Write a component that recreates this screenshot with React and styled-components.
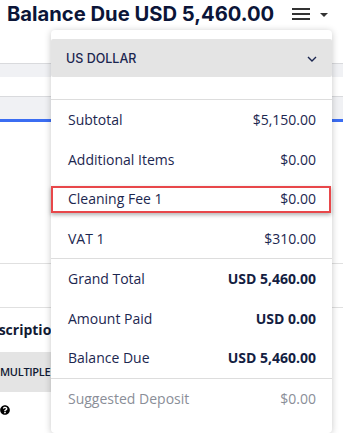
import React from "react"
import styled, { createGlobalStyle } from "styled-components"
import { FaQuestionCircle } from "react-icons/fa"

const GlobalStyle = createGlobalStyle`
  html, body {
    margin: 0;
    padding: 0;
    background: #fff;
    overflow: hidden;
  }
  * { box-sizing: border-box; }
`

const rowsTop = [
  { label: "Subtotal", value: "$5,150.00" },
  { label: "Additional Items", value: "$0.00" },
  { label: "Cleaning Fee 1", value: "$0.00", highlight: true },
  { label: "VAT 1", value: "$310.00" },
]

const rowsTotals = [
  { label: "Grand Total", value: "USD 5,460.00", bold: true },
  { label: "Amount Paid", value: "USD 0.00", bold: true },
  { label: "Balance Due", value: "USD 5,460.00", bold: true },
]

export default function App() {
  return (
    <S.Page>
      <GlobalStyle />
      <S.TopBar>
        <S.Title>Balance Due USD 5,460.00</S.Title>
        <S.MenuToggle>
          <S.Burger>
            <span />
            <span />
            <span />
          </S.Burger>
          <S.Caret />
        </S.MenuToggle>
      </S.TopBar>

      <S.Backdrop>
        <S.Band $top={33} $height={13} />
        <S.Band $top={19} $height={22} $accent />
        <S.Rule $top={141} />
        <S.Rule $top={43} />
        <S.ColHead>Description</S.ColHead>
        <S.GrayCell>MULTIPLE</S.GrayCell>
        <S.Help>
          <FaQuestionCircle size={10} />
        </S.Help>
      </S.Backdrop>

      <S.Panel>
        <S.SelectWrap>
          <S.Select>
            <span>US DOLLAR</span>
            <svg width="10" height="6" viewBox="0 0 10 6">
              <path d="M1 1l4 4 4-4" fill="none" stroke="#1b2650" strokeWidth="1.4" />
            </svg>
          </S.Select>
        </S.SelectWrap>
        <S.Section>
          {rowsTop.map((r) => (
            <S.Row key={r.label} $highlight={r.highlight}>
              <span>{r.label}</span>
              <S.Value>{r.value}</S.Value>
            </S.Row>
          ))}
        </S.Section>
        <S.Section>
          {rowsTotals.map((r) => (
            <S.Row key={r.label}>
              <span>{r.label}</span>
              <S.Value $bold={r.bold}>{r.value}</S.Value>
            </S.Row>
          ))}
        </S.Section>
        <S.Section $last>
          <S.Row $muted>
            <span>Suggested Deposit</span>
            <S.Value>$0.00</S.Value>
          </S.Row>
        </S.Section>
      </S.Panel>
    </S.Page>
  )
}

const S = {
  Page: styled.div`
    position: relative;
    width: 343px;
    height: 433px;
    overflow: hidden;
    background: #fff;
  `,
  TopBar: styled.div`
    display: flex;
    align-items: center;
    height: 30px;
    padding: 0 0 3px 7px;
  `,
  Title: styled.h1`
    margin: 0;
    font-family: Inter, "Liberation Sans", sans-serif;
    font-weight: 700;
    font-size: 20.2px;
    color: #0b1538;
    white-space: nowrap;
  `,
  MenuToggle: styled.div`
    display: flex;
    align-items: center;
    margin-left: 18px;
    gap: 10px;
  `,
  Burger: styled.div`
    display: flex;
    flex-direction: column;
    gap: 3px;
    width: 18px;
    span {
      display: block;
      height: 2px;
      background: #333;
    }
  `,
  Caret: styled.div`
    width: 0;
    height: 0;
    margin-top: 3px;
    border-left: 4px solid transparent;
    border-right: 4px solid transparent;
    border-top: 4px solid #333;
  `,
  Backdrop: styled.div`
    display: flex;
    flex-direction: column;
  `,
  Band: styled.div`
    margin-top: ${(p) => p.$top}px;
    height: ${(p) => p.$height + 1}px;
    background: #f0f1f4;
    border-top: 1px solid #d9dadd;
    ${(p) => p.$accent && `border-bottom: 3px solid #3b6df2; height: ${p.$height + 4}px;`}
  `,
  Rule: styled.div`
    margin-top: ${(p) => p.$top}px;
    height: 1px;
    background: #e0e0e0;
  `,
  ColHead: styled.div`
    margin: 0 0 0 -20px;
    height: 44px;
    line-height: 44px;
    font-family: "Open Sans", sans-serif;
    font-weight: 700;
    font-size: 14px;
    color: #111a33;
    white-space: nowrap;
  `,
  GrayCell: styled.div`
    width: 220px;
    height: 40px;
    line-height: 40px;
    background: #e4e4e4;
    font-family: "Open Sans", sans-serif;
    font-weight: 600;
    font-size: 11px;
    letter-spacing: -0.3px;
    color: #111a33;
  `,
  Help: styled.div`
    display: flex;
    margin-top: 13px;
    color: #000;
  `,
  Panel: styled.div`
    position: absolute;
    top: 30px;
    left: 51px;
    width: 281px;
    height: 403px;
    background: #fff;
    border-radius: 4px;
    box-shadow: 0 1px 7px rgba(0, 0, 0, 0.22);
    font-family: "Open Sans", sans-serif;
    font-size: 14px;
    color: #1c2750;
  `,
  SelectWrap: styled.div`
    padding: 9px 0 22px;
  `,
  Select: styled.div`
    display: flex;
    align-items: center;
    justify-content: space-between;
    height: 38px;
    padding: 0 15px 0 15px;
    background: #e4e4e4;
    border-radius: 2px;
    font-family: Inter, "Liberation Sans", sans-serif;
    font-size: 12.5px;
    font-weight: 500;
    color: #1b2650;
    svg {
      margin-top: 1px;
    }
  `,
  Section: styled.div`
    border-top: 1px solid #dddddd;
    ${(p) => p.$last && "padding-bottom: 14px;"}
  `,
  Row: styled.div`
    position: relative;
    display: flex;
    align-items: center;
    justify-content: space-between;
    height: 39.5px;
    padding: 0 16px 0 17px;
    color: ${(p) => (p.$muted ? "#8a8e98" : "#1c2750")};
    ${(p) =>
      p.$highlight &&
      `
      &::after {
        content: "";
        position: absolute;
        left: 0;
        right: 1px;
        top: 7px;
        bottom: 6px;
        border: 2px solid #e8474a;
        box-shadow: 0 2px 4px rgba(0, 0, 0, 0.3);
      }
    `}
  `,
  Value: styled.span`
    font-weight: ${(p) => (p.$bold ? 700 : 400)};
    color: ${(p) => (p.$bold ? "#141e42" : "inherit")};
  `,
}
